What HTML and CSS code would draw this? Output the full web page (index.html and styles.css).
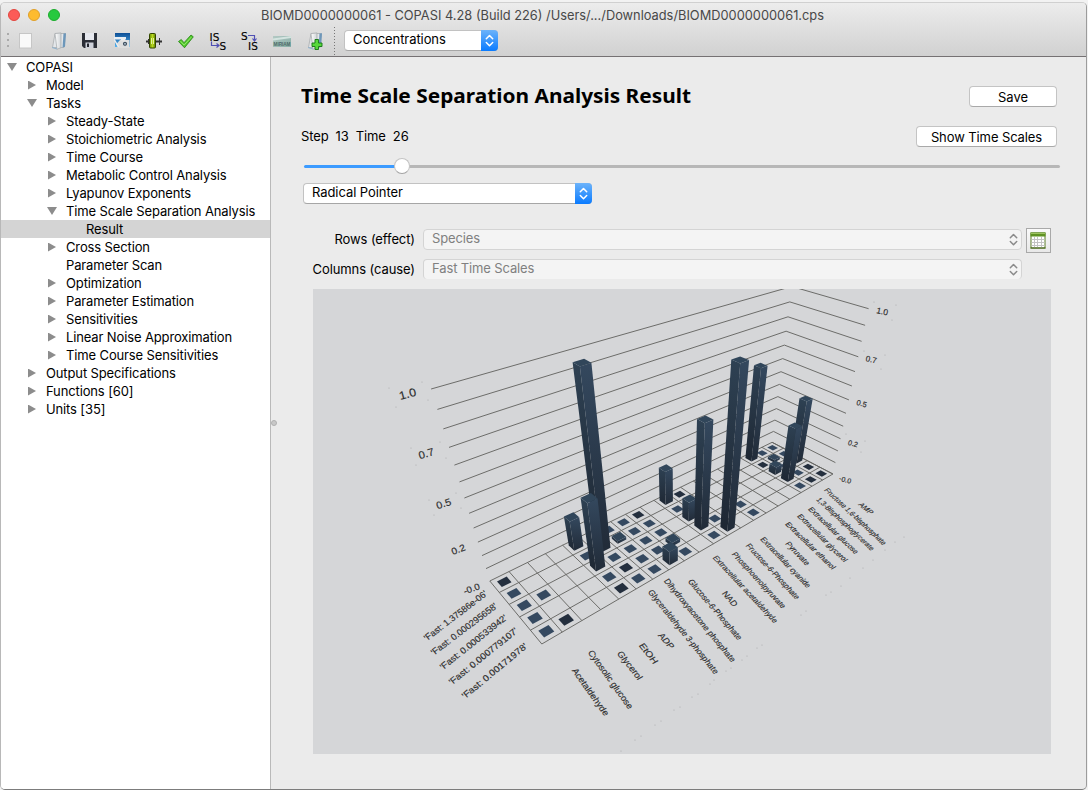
FILE: index.html
```html
<!DOCTYPE html>
<html lang="en">
<head>
<meta charset="utf-8">
<title>COPASI</title>
<link rel="stylesheet" href="styles.css">
</head>
<body>
<div class="window">
  <header class="head">
    <div class="titlebar">
      <div class="lights"><i class="light red"></i><i class="light amber"></i><i class="light green"></i></div>
      <svg class="title" width="620" height="22"><text x="2" y="16" textLength="563" lengthAdjust="spacingAndGlyphs">BIOMD0000000061 - COPASI 4.28 (Build 226) /Users/.../Downloads/BIOMD0000000061.cps</text></svg>
    </div>
    <div class="toolbar">
      <svg class="tools" width="340" height="30" viewBox="0 26 340 30">
        <defs>
          <linearGradient id="page" x1="0" x2="1"><stop offset="0" stop-color="#fff"/><stop offset="1" stop-color="#cfd3d6"/></linearGradient>
          <linearGradient id="blue" x1="0" x2="0" y1="0" y2="1"><stop offset="0" stop-color="#0d4f96"/><stop offset="1" stop-color="#58b4ee"/></linearGradient>
          <linearGradient id="lime" x1="0" x2="1"><stop offset="0" stop-color="#6a8f00"/><stop offset=".5" stop-color="#b8d820"/><stop offset="1" stop-color="#5c7c00"/></linearGradient>
          <linearGradient id="mir" x1="0" x2="1" y1="0" y2="1"><stop offset="0" stop-color="#b4c9c4"/><stop offset="1" stop-color="#86ada5"/></linearGradient>
        </defs>
        <g fill="#aaa"><rect x="7" y="33" width="2" height="2"/><rect x="7" y="39" width="2" height="2"/><rect x="7" y="45" width="2" height="2"/></g>
        <rect x="19.500" y="33.500" width="12" height="14.500" fill="#f9f9f9" stroke="#c6c6c6"/>
        <g id="folder"><path d="M55 33.500h10.500L64 47.500H52.500z" fill="#e4e7ea" stroke="#a9adb0" stroke-width=".8"/><path d="M55 33.500l6-.6v14.800l-4 1.600z" fill="url(#page)" stroke="#a2a6a9" stroke-width=".7"/><path d="M63.500 33.500l2.500-.2-1 13.500-2.500.8z" fill="#6d97ba"/><path d="M52 47.500l5 1.500" stroke="#8fb3cf"/></g>
        <path d="M82 33h15v15H84l-2-2z" fill="#2b2e36"/><rect x="85" y="33" width="9" height="7" fill="#e6e8ee"/><rect x="85.500" y="42.500" width="8" height="5.500" fill="#cfd2da"/><rect x="87" y="43.500" width="2" height="3.500" fill="#23262e"/>
        <path d="M115 33h15v14h-15z" fill="url(#blue)"/><path d="M114 37h12v2.500h-12z" fill="#e8eef4"/><path d="M120 40h9.500v8h-11l-2-4z" fill="#dedede"/><path d="M121 38.500h4v2h-4z" fill="#eee"/><circle cx="125" cy="43.800" r="2.600" fill="#42515f" stroke="#fff" stroke-width=".8"/><circle cx="125" cy="43.800" r=".9" fill="#bcd"/><path d="M114.500 40l4 7" stroke="#eee" stroke-width="1.500"/>
        <path d="M146 41.500h16" stroke="#333" stroke-width="2"/><path d="M148.500 39v5M159.500 38v7" stroke="#333"/><rect x="149.500" y="33.500" width="6" height="14.500" rx="1" fill="url(#lime)" stroke="#324500"/><path d="M151.500 38v6M153.500 38v6" stroke="#f4ffc0" stroke-width=".8"/>
        <path d="M178.500 41.500l2.800-2 2.700 3.200 7-7.700 2.300 1.800-8.800 11z" fill="#52c92c" stroke="#238413" stroke-width=".8"/><path d="M180.500 41.200l3.600 3.900 7.200-8" fill="none" stroke="#a6f07d" stroke-width=".8"/>
        <g class="is"><text x="209.500" y="40.500" textLength="10">IS</text><text x="219.500" y="49.500">S</text><text x="241" y="40">S</text><text x="248" y="49.500" textLength="10">IS</text></g>
        <g fill="none" stroke="#5050b4" stroke-width="1.200"><path d="M211.500 41.500v4h7M216.500 43.500l2.500 2-2.500 2"/><path d="M248 35.500h6.500v5M252.500 38.500l2 2.500 2-2.500"/></g>
        <rect x="273" y="36" width="18" height="11" fill="url(#mir)"/><path d="M273 39.500l18-2.500" stroke="#d4e4e0" stroke-width="2"/><text class="miriam" x="273.500" y="45.800" textLength="17" lengthAdjust="spacingAndGlyphs">MIRIAM</text>
        <use href="#folder" x="256"/><path d="M315 39.500h3.500v3.500h3.500v3.500h-3.500v3h-3.500v-3h-3v-3.500h3z" fill="#58d83b" stroke="#147414" stroke-width=".9"/>
        <path d="M334.500 27v28" stroke="#777" stroke-dasharray="1 2"/>
      </svg>
      <div class="combo small"><span>Concentrations</span><b><svg width="17" height="21"><path d="M5.300 8.800L8.500 5.500l3.200 3.300M5.300 12.500l3.200 3.300 3.200-3.300"/></svg></b></div>
    </div>
  </header>
  <div class="body">
    <nav class="tree" id="tree"></nav>
    <div class="split"><i></i></div>
    <main class="main">
      <div class="row first"><h1><svg width="420" height="34"><text x="0" y="21" textLength="390" lengthAdjust="spacingAndGlyphs">Time Scale Separation Analysis Result</text></svg></h1><button class="btn save">Save</button></div>
      <div class="row second"><p class="step">Step&nbsp; 13&nbsp; Time&nbsp; 26</p><button class="btn show">Show Time Scales</button></div>
      <div class="slider"><i class="done"></i><i class="thumb"></i><i class="rest"></i></div>
      <div class="combo wide"><span>Radical Pointer</span><b><svg width="17" height="21"><path d="M5.300 8.800L8.500 5.500l3.200 3.300M5.300 12.500l3.200 3.300 3.200-3.300"/></svg></b></div>
      <div class="axes">
        <label>Rows (effect)</label>
        <div class="combo off"><span>Species</span><b><svg width="17" height="21"><path d="M5.300 8.800L8.500 5.500l3.200 3.300M5.300 12.500l3.200 3.300 3.200-3.300"/></svg></b></div>
        <div class="tablebtn"><svg width="23" height="23"><rect x="4" y="4" width="14" height="15" fill="#fff" stroke="#5b7d25"/><rect x="3.500" y="3.500" width="15" height="4" fill="#5f9222"/><path d="M4 4.500h14" stroke="#9cc35e"/><path d="M4.500 10.500h13M4.500 13.500h13M4.500 16.500h13M7.500 8v10.500M10.500 8v10.500M14.500 8v10.500" stroke="#c3c3c3"/><path d="M3.500 19h15" stroke="#3f5e12"/></svg></div>
        <label>Columns (cause)</label>
        <div class="combo off cut"><span>Fast Time Scales</span><b><svg width="17" height="21"><path d="M5.300 8.800L8.500 5.500l3.200 3.300M5.300 12.500l3.200 3.300 3.200-3.300"/></svg></b></div>
      </div>
      <svg class="chart" id="chart" width="738" height="465" viewBox="313 289 738 465"></svg>
    </main>
  </div>
</div>
<script src="app.js"></script>
</body>
</html>
```
FILE: styles.css
```css
* { box-sizing: border-box; }
body {
  margin: 0;
  width: 1088px;
  height: 790px;
  overflow: hidden;
  background: #f2f2f2;
  font: 13px/18px Inter, "Liberation Sans", sans-serif;
  letter-spacing: -.07px;
  color: #000;
}
.window {
  width: 1087px;
  height: 788px;
  margin-top: 2px;
  border: 1px solid #9c9c9c;
  border-top-color: #d0d0d0;
  border-left-color: #b8b8b8;
  border-bottom-color: #7c7c7c;
  border-radius: 5px;
  overflow: hidden;
  background: #ebebeb;
  display: flex;
  flex-direction: column;
}
.head {
  height: 54px;
  flex: none;
  background: linear-gradient(#ececec, #d1d1d1);
  border-bottom: 1px solid #757173;
}
.titlebar { display: flex; height: 23px; align-items: center; }
.lights { display: flex; gap: 8px; padding-left: 7px; width: 258px; flex: none; }
.light { width: 12px; height: 12px; border-radius: 50%; border: 1px solid; }
.red { background: #fc5b57; border-color: #e2463f; }
.amber { background: #fdbb2f; border-color: #e0a02a; }
.green { background: #27c93f; border-color: #1cac2c; }
.title { fill: #484848; font-size: 13px; flex: none; letter-spacing: 0; }
.toolbar { display: flex; height: 30px; margin-left: -1px; }
.tools { flex: none; margin-right: 4px; }
.is { font: 10.5px "DejaVu Sans", sans-serif; fill: #000; stroke: #000; stroke-width: .15; letter-spacing: 0; }
.miriam { font: bold 6px "Liberation Sans", sans-serif; fill: #4d6b68; }
.combo {
  height: 21px;
  display: flex;
  justify-content: space-between;
  background: #fff;
  border: 1px solid #c2c2c2;
  border-bottom-color: #a6a6a6;
  border-radius: 4px;
  padding-left: 8px;
  line-height: 17px;
}
.combo b {
  width: 17px;
  margin: -1px;
  border-radius: 0 4px 4px 0;
  background: linear-gradient(#6cb3fa, #0a7bff);
}
.combo svg { display: block; fill: none; stroke: #fff; stroke-width: 1.5; stroke-linecap: round; stroke-linejoin: round; }
.small { width: 154px; margin-top: 4px; letter-spacing: -.08px; }
.wide { width: 289px; margin: 9px 0 0 31px; }
.off { background: #f4f4f4; border-color: #d4d4d4; color: #808080; letter-spacing: -.13px; }
.off b { background: none; }
.off svg { stroke: #8b8b8b; }
.cut { border-bottom: 0; height: 20px; }
.body { display: flex; flex: 1; min-height: 0; }
.tree { width: 269px; background: #fff; padding-top: 1px; letter-spacing: -.13px; }
.item { display: flex; height: 18px; align-items: center; white-space: nowrap; }
.item.on { background: #d4d4d4; }
.item i { width: 8px; height: 9px; margin: 0 10px 0 7px; background: #8c8c8c; clip-path: polygon(0 0, 100% 50%, 0 100%); }
.item i.open { width: 10px; height: 8px; margin: 0 9px 0 6px; clip-path: polygon(0 0, 100% 0, 50% 100%); }
.item i.leaf { background: none; }
.split { width: 2px; border-left: 1px solid #b9b9b9; display: flex; align-items: center; }
.split i { flex: none; width: 6px; height: 6px; border-radius: 50%; background: #c8c8c8; border: 1px solid #b0b0b0; }
.main { flex: 1; min-width: 0; padding-top: 29px; }
.row { display: flex; justify-content: space-between; padding: 0 29px 0 29px; height: 40px; align-items: flex-start; }
h1 { margin: -4px 0 0; letter-spacing: 0; }
h1 text { font: bold 19.5px "Noto Sans", "Open Sans", sans-serif; }
h1 svg { display: block; }
.btn {
  height: 21px;
  padding: 0;
  font: inherit;
  color: #000;
  background: #fff;
  border: 1px solid #c4c4c4;
  border-bottom-color: #a9a9a9;
  border-radius: 4px;
}
.save { width: 88px; }
.show { width: 141px; letter-spacing: -.1px; }
.step { margin: 1px 0 0; letter-spacing: -.12px; }
.second { height: 32px; }
.slider { display: flex; align-items: center; height: 16px; margin: 0 26px 0 32px; }
.done { width: 91px; height: 3px; background: #3c9bff; border-radius: 2px 0 0 2px; }
.thumb { width: 16px; height: 16px; margin: 0 -1px; border-radius: 50%; background: #fff; border: 1px solid #c4c4c4; border-bottom-color: #a4a4a4; z-index: 1; }
.rest { flex: 1; height: 3px; background: #b7b7b7; border-radius: 0 2px 2px 0; }
.axes {
  display: grid;
  grid-template-columns: 143px 599px 25px;
  grid-template-rows: 30px 20px;
  column-gap: 8px;
  margin-top: 25px;
}
.axes label { text-align: right; line-height: 21px; letter-spacing: -.1px; }
.tablebtn { width: 25px; height: 25px; border: 1px solid #a9a9a9; background: linear-gradient(#fafafa, #e8e8e8); margin: -1px 0 0 -4px; }
.tablebtn svg { display: block; }
.chart { display: block; margin: 10px 0 0 41px; background: #d5d6d8; letter-spacing: 0; }
.chart text { font-family: "Liberation Sans", sans-serif; fill: #2d2d2d; stroke: #2d2d2d; stroke-width: .15; dominant-baseline: central; }
```
FILE: app.js
```js
const tree = [
  [0, 'COPASI', 'open'], [1, 'Model'], [1, 'Tasks', 'open'], [2, 'Steady-State'],
  [2, 'Stoichiometric Analysis'], [2, 'Time Course'], [2, 'Metabolic Control Analysis'],
  [2, 'Lyapunov Exponents'], [2, 'Time Scale Separation Analysis', 'open'], [3, 'Result', 'leaf'],
  [2, 'Cross Section'], [2, 'Parameter Scan', 'leaf'], [2, 'Optimization'], [2, 'Parameter Estimation'],
  [2, 'Sensitivities'], [2, 'Linear Noise Approximation'], [2, 'Time Course Sensitivities'],
  [1, 'Output Specifications'], [1, 'Functions [60]'], [1, 'Units [35]']
];
document.getElementById('tree').innerHTML = tree.map(([depth, name, kind = '']) =>
  `<div class="item${name === 'Result' ? ' on' : ''}" style="padding-left:${depth * 20}px"><i class="${kind}"></i><span>${name}</span></div>`).join('');

// Perspective projection of (column, row, height), each in 0..1.
function project(u, v, w) {
  const d = 1 + 0.3892 * u - 0.1116 * v - 0.2385 * w;
  return [(489.8 + 582.8 * u - 8.49 * v - 161.5 * w) / d, (581 + 33.42 * u - 8.84 * v - 284.8 * w) / d];
}
const pt = p => p[0].toFixed(1) + ' ' + p[1].toFixed(1);
const line = (a, b, c) => `<path d="M${pt(a)}L${pt(b)}${c ? 'L' + pt(c) : ''}"/>`;
let out = `<defs>
<linearGradient id="lit" x1="0" x2="0" y1="0" y2="1"><stop offset="0" stop-color="#34485e"/><stop offset="1" stop-color="#212b38"/></linearGradient>
<linearGradient id="dim" x1="0" x2="0" y1="0" y2="1"><stop offset="0" stop-color="#2e4153"/><stop offset="1" stop-color="#1e2733"/></linearGradient></defs>
<g fill="none" stroke="#666663" stroke-width=".95">`;
for (let k = 0; k <= 12; k++) out += line(project(0, 0, k / 12), project(1, 0, k / 12), project(1, 1, k / 12));
for (let i = 0; i <= 20; i++) out += line(project(i / 20, 0, 0), project(i / 20, 1, 0));
for (let j = 1; j <= 5; j++) out += line(project(0, j / 5, 0), project(1, j / 5, 0));
out += '</g>';

// One string per row; b = light tile, d = dark tile, . = empty.
const tiles = [
  'd.....bbd..d......bb',
  'b...b..bb.b......d.b',
  'bb...bbbb.........b.',
  'b...bdbb...b.b....bd',
  'bd..dbb.b.b..b...bdd'
];
const bars = {
  '4,0': .193, '10,0': .226, '17,0': .625, '5,1': 1, '6,1': .018, '18,1': .018,
  '4,2': .423, '10,2': .13, '17,2': .056, '19,2': .43, '8,3': .025, '10,3': .65,
  '17,3': .364, '7,4': .09, '11,4': .945
};
const poly = (pts, fill) => `<polygon points="${pts.map(pt).join(' ')}" fill="${fill}"/>`;
const inset = (i, j, e) => [[e, e], [1 - e, e], [1 - e, 1 - e], [e, 1 - e]].map(([a, b]) => [(i + a) / 20, (j + b) / 5]);
for (let i = 19; i >= 0; i--) for (let j = 0; j < 5; j++) {
  const t = tiles[j][i], h = bars[i + ',' + j];
  if (t !== '.') out += poly(inset(i, j, .25).map(p => project(...p, 0)), t === 'd' ? '#242f3e' : '#354960');
  if (h) {
    const ring = inset(i, j, .23);
    const low = ring.map(p => project(...p, 0)), top = ring.map(p => project(...p, h));
    for (let s = 0; s < 4; s++) {
      const n = (s + 1) % 4, a = low[s], b = low[n], c = top[n];
      const facing = (b[0] - a[0]) * (c[1] - a[1]) - (b[1] - a[1]) * (c[0] - a[0]);
      if (facing > 0) out += poly([a, b, c, top[s]], s === 2 ? 'url(#lit)' : 'url(#dim)');
    }
    out += poly(top, '#31465a');
  }
}

// Labels: text, start x/y, end x/y, size.
const species = [
  ['Acetaldehyde', 574, 669, 607, 715, 9], ['Cytosolic glucose', 590, 651, 631, 708, 9],
  ['Glycerol', 619, 652, 640.500, 679, 9], ['EtOH', 641, 644, 656, 663, 9], ['ADP', 660, 634, 672.500, 648, 9],
  ['Glyceraldehyde 3-phosphate', 650, 590.500, 717, 673, 8.500], ['Dihydroxyacetone phosphate', 666, 579.500, 734, 661, 8.500],
  ['Glucose-6-Phosphate', 690, 580, 740.500, 639, 8.500], ['NAD', 724, 592, 736, 605.500, 8.500],
  ['Extracellular acetaldehyde', 714.500, 556.500, 776, 622, 8], ['Phosphoenolpyruvate', 733.500, 553, 784, 607.500, 8],
  ['Fructose-6-Phosphate', 747.500, 544.500, 798, 598.500, 8], ['Extracellular cyanide', 762, 538, 809, 587, 8],
  ['Pyruvate', 787, 542.500, 808, 564.500, 8], ['Extracellular ethanol', 787, 523, 834, 568.500, 7.500],
  ['Extracellular glycerol', 799, 515, 846, 561, 7.500], ['Extracellular glucose', 810, 508, 857, 553, 7.500],
  ['1,3-Bisphosphoglycerate', 818, 498.500, 873, 549.500, 7.500], ['Fructose 1,6-bisphosphate', 826, 489, 885, 544, 7.500],
  ['AMP', 860, 503.500, 872, 513.500, 7.500]
];
const scales = [
  ["'Fast: 1.37586e-06'", 425, 639, 486, 592.500, 9], ["'Fast: 0.000295658'", 432, 653.500, 496, 605, 9],
  ["'Fast: 0.000533942'", 441, 668, 506, 616.500, 9], ["'Fast: 0.000779107'", 450, 683, 516.500, 629.500, 9],
  ["'Fast: 0.00171978'", 463, 697, 526, 645, 9]
];
function label([text, x1, y1, x2, y2, size], dx, dy) {
  const len = Math.hypot(x2 - x1, y2 - y1);
  return `<text transform="matrix(${(x2 - x1) / len} ${(y2 - y1) / len} ${dx} ${dy} ${x1} ${y1})" font-size="${size}" textLength="${len}" lengthAdjust="spacingAndGlyphs">${text}</text>`;
}
species.forEach(s => { out += label(s, -.86, .5); });
scales.forEach(s => { out += label(s, .64, .77); });
[
  ['1.0', 407.500, 394, 11.500, -15], ['0.7', 426.300, 453.300, 10.500, -16], ['0.5', 443.700, 503.700, 10, -18],
  ['0.2', 458.300, 549.300, 9.500, -20], ['-0.0', 471.700, 589, 9, -20],
  ['1.0', 882.300, 311.300, 8.500, 12], ['0.7', 871.300, 359.700, 8, 12], ['0.5', 861.700, 403.700, 7.500, 14],
  ['0.2', 853, 443.700, 7.200, 15], ['-0.0', 845.300, 479.700, 7, 15]
].forEach(([t, x, y, s, r], k) => {
  out += `<text transform="translate(${x} ${y}) rotate(${r}) scale(${k < 5 ? 1.08 : 1} 1)" text-anchor="middle" font-size="${s}">${t}</text>`;
});
const specks = [[389, 388], [422, 382], [428, 400], [396, 407], [411, 448], [440, 442], [446, 458], [416, 465], [429, 500], [456, 493], [461, 508], [434, 515],
  [621, 751], [635, 740], [641, 736], [655, 725], [661, 721], [674, 710], [680, 707], [692, 697], [698, 694], [710, 684], [714, 680], [726, 671], [731, 668], [742, 660], [747, 656], [757, 648], [762, 645],
  [801, 615], [806, 611], [826, 595], [831, 592], [841, 586], [850, 578], [863, 568], [873, 560], [885, 550], [895, 542], [904, 537], [874, 302], [896, 305], [892, 320], [864, 351], [885, 355], [881, 369], [846, 434], [865, 441], [861, 452]];
out += specks.map(([x, y]) => `<circle cx="${x}" cy="${y}" r=".6" fill="#a9a9ab"/>`).join('');
document.getElementById('chart').innerHTML = out;
```
